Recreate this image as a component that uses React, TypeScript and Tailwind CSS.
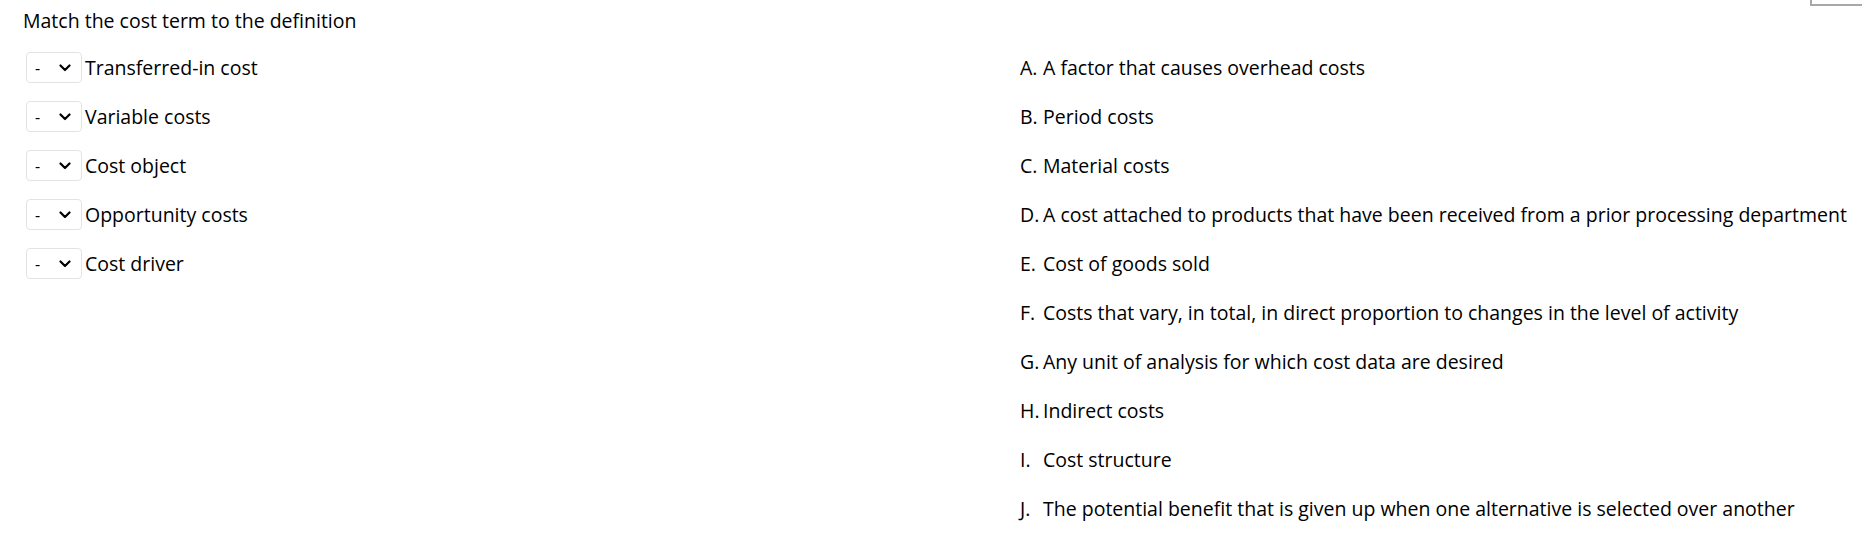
const terms = [
  "Transferred-in cost",
  "Variable costs",
  "Cost object",
  "Opportunity costs",
  "Cost driver",
];

const definitions: [string, string][] = [
  ["A.", "A factor that causes overhead costs"],
  ["B.", "Period costs"],
  ["C.", "Material costs"],
  ["D.", "A cost attached to products that have been received from a prior processing department"],
  ["E.", "Cost of goods sold"],
  ["F.", "Costs that vary, in total, in direct proportion to changes in the level of activity"],
  ["G.", "Any unit of analysis for which cost data are desired"],
  ["H.", "Indirect costs"],
  ["I.", "Cost structure"],
  ["J.", "The potential benefit that is given up when one alternative is selected over another"],
];

function Chevron() {
  return (
    <svg width="12" height="8" viewBox="0 0 12 8" className="shrink-0">
      <path d="M1.5 1.5 L6 6 L10.5 1.5" fill="none" stroke="#000" strokeWidth="2.2" strokeLinecap="round" strokeLinejoin="round" />
    </svg>
  );
}

function TermRow({ label }: { label: string }) {
  return (
    <div className="flex h-[49px] items-start">
      <div className="flex h-[31px] w-[56px] items-center rounded-[4px] border border-[#e3e3e3] bg-white pl-[8px] pr-[10px]">
        <span className="flex-1 text-[16px] leading-none">-</span>
        <Chevron />
      </div>
      <span className="ml-[3px] h-[31px] leading-[31px]">{label}</span>
    </div>
  );
}

export default function App() {
  return (
    <div
      className="relative h-[542px] w-[1862px] overflow-hidden bg-white text-[19.5px] text-black"
      style={{ fontFamily: '"Open Sans", sans-serif' }}
    >
      <div className="absolute right-0 top-0 h-[6px] w-[52px] border-b-2 border-l-2 border-[#a8a8a8]" />
      <div className="px-[23px] pt-[6px]">
        <h1 className="h-[46px] leading-[30px]">Match the cost term to the definition</h1>
        <div className="flex">
          <div className="w-[997px] shrink-0 pl-[3px]">
            {terms.map((t) => (
              <TermRow key={t} label={t} />
            ))}
          </div>
          <div>
            {definitions.map(([letter, text]) => (
              <div key={letter} className="flex h-[49px] leading-[31px]">
                <span className="w-[23px] shrink-0">{letter}</span>
                <span className="whitespace-nowrap">{text}</span>
              </div>
            ))}
          </div>
        </div>
      </div>
    </div>
  );
}
